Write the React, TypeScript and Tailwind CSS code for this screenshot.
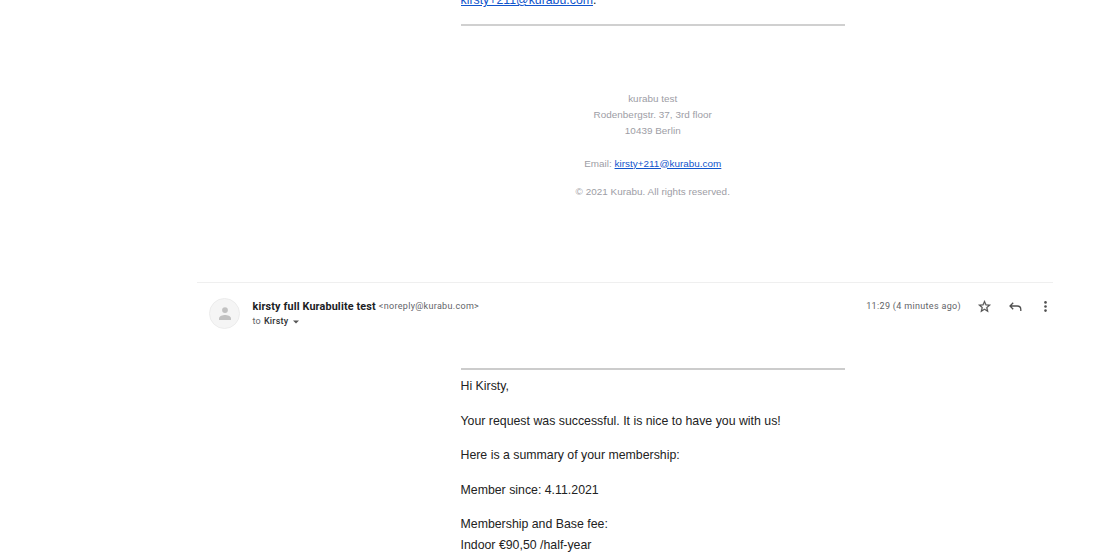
const SENDER = {
  name: "kirsty full Kurabulite test",
  address: "<noreply@kurabu.com>",
  recipient: "Kirsty",
  sentAt: "11:29 (4 minutes ago)",
};

const CONTACT_EMAIL = "kirsty+211@kurabu.com";

const ADDRESS_LINES = ["kurabu test", "Rodenbergstr. 37, 3rd floor", "10439 Berlin"];

const MESSAGE_PARAGRAPHS = [
  ["Hi Kirsty,"],
  ["Your request was successful. It is nice to have you with us!"],
  ["Here is a summary of your membership:"],
  ["Member since: 4.11.2021"],
  ["Membership and Base fee:", "Indoor €90,50 /half-year"],
];

function Avatar() {
  return (
    <div className="flex size-[31px] shrink-0 items-center justify-center rounded-full border border-[#ececec] bg-[#f5f5f5]">
      <svg viewBox="0 0 12 13" className="h-[13px] w-3 fill-[#c2c2c2]">
        <circle cx="6" cy="3.1" r="2.9" />
        <path d="M0 12.9v-1.6C0 9.2 3.8 8 6 8s6 1.2 6 3.3v1.6z" />
      </svg>
    </div>
  );
}

function MessageActions() {
  return (
    <div className="flex items-center text-[#505050]">
      <button type="button" aria-label="Star">
        <svg
          viewBox="0 0 24 24"
          className="size-[15px] fill-current stroke-current stroke-[0.4]"
        >
          <path d="M22 9.24l-7.19-.62L12 2 9.19 8.63 2 9.24l5.46 4.73L5.82 21 12 17.27 18.18 21l-1.63-7.03L22 9.24zM12 15.4l-3.76 2.27 1-4.28-3.32-2.88 4.38-.38L12 6.1l1.71 4.04 4.38.38-3.32 2.88 1 4.28L12 15.4z" />
        </svg>
      </button>
      <button type="button" aria-label="Reply" className="ml-4">
        <svg
          viewBox="0 0 15 15"
          className="size-[15px] fill-none stroke-current stroke-[1.3]"
        >
          <path d="M5.2 3.7 2 7l3.2 3.3M2 7h7.2c2.2 0 3.6 1.4 3.6 3.5v1.4" />
        </svg>
      </button>
      <button type="button" aria-label="More" className="ml-[15px]">
        <svg viewBox="0 0 15 15" className="size-[15px] fill-current">
          <circle cx="7.5" cy="3.4" r="1.3" />
          <circle cx="7.5" cy="7.5" r="1.3" />
          <circle cx="7.5" cy="11.6" r="1.3" />
        </svg>
      </button>
    </div>
  );
}

function MessageHeader() {
  return (
    <header className="ml-[197px] flex h-[86px] w-[856px] border-t border-[#efefef] pl-3 pt-[15px] font-[Roboto,sans-serif]">
      <Avatar />
      <div className="ml-[12.5px] pt-px text-[9px] leading-[15px] tracking-[0.2px] text-[#5f6368]">
        <p className="flex h-[15px] items-center whitespace-nowrap">
          <span className="text-[10.8px] font-bold tracking-[0.15px] text-[#202124]">
            {SENDER.name}
          </span>
          <span className="ml-[3px] tracking-[0.31px]">{SENDER.address}</span>
        </p>
        <p className="flex h-[15px] items-center whitespace-nowrap">
          to
          <span className="ml-[3px] font-medium text-[#303134]">{SENDER.recipient}</span>
          <svg viewBox="0 0 6 4" className="ml-[5px] h-1 w-1.5 fill-[#555]">
            <path d="M0 .5h6L3 3.5z" />
          </svg>
        </p>
      </div>
      <div className="ml-auto mt-px flex h-[15px] items-center">
        <time className="mr-4 whitespace-nowrap text-[9px] tracking-[0.33px] text-[#5f6368]">
          {SENDER.sentAt}
        </time>
        <MessageActions />
      </div>
    </header>
  );
}

function PreviousMessage() {
  return (
    <section className="ml-[460.5px] h-[282px] w-[384.5px] overflow-hidden">
      <p className="-mt-[10px] h-[34px] text-[12.33px] leading-[21px] text-[#222]">
        <a href={`mailto:${CONTACT_EMAIL}`} className="text-[#1155cc] underline">
          {CONTACT_EMAIL}
        </a>
        .
      </p>
      <hr className="border-t-2 border-[#d0d0d0]" />
      <footer className="pt-[65px] text-center text-[9.9px] leading-[16.2px] tracking-[0.03px] text-[#9d9da5]">
        {ADDRESS_LINES.map((line) => (
          <p key={line}>{line}</p>
        ))}
        <p className="mt-4">
          Email:{" "}
          <a href={`mailto:${CONTACT_EMAIL}`} className="text-[#1155cc] underline">
            {CONTACT_EMAIL}
          </a>
        </p>
        <p className="mt-3">© 2021 Kurabu. All rights reserved.</p>
      </footer>
    </section>
  );
}

export default function App() {
  return (
    <main className="h-[554px] overflow-hidden bg-white font-['Liberation_Sans',Arial,sans-serif]">
      <PreviousMessage />
      <MessageHeader />
      <article className="ml-[460.5px] w-[384.5px] border-t-2 border-[#cccccc] pt-1.5 text-[12.33px] leading-[20.6px] text-[#222]">
        {MESSAGE_PARAGRAPHS.map((lines) => (
          <div key={lines[0]} className="mb-[14px]">
            {lines.map((line) => (
              <p key={line}>{line}</p>
            ))}
          </div>
        ))}
      </article>
    </main>
  );
}
